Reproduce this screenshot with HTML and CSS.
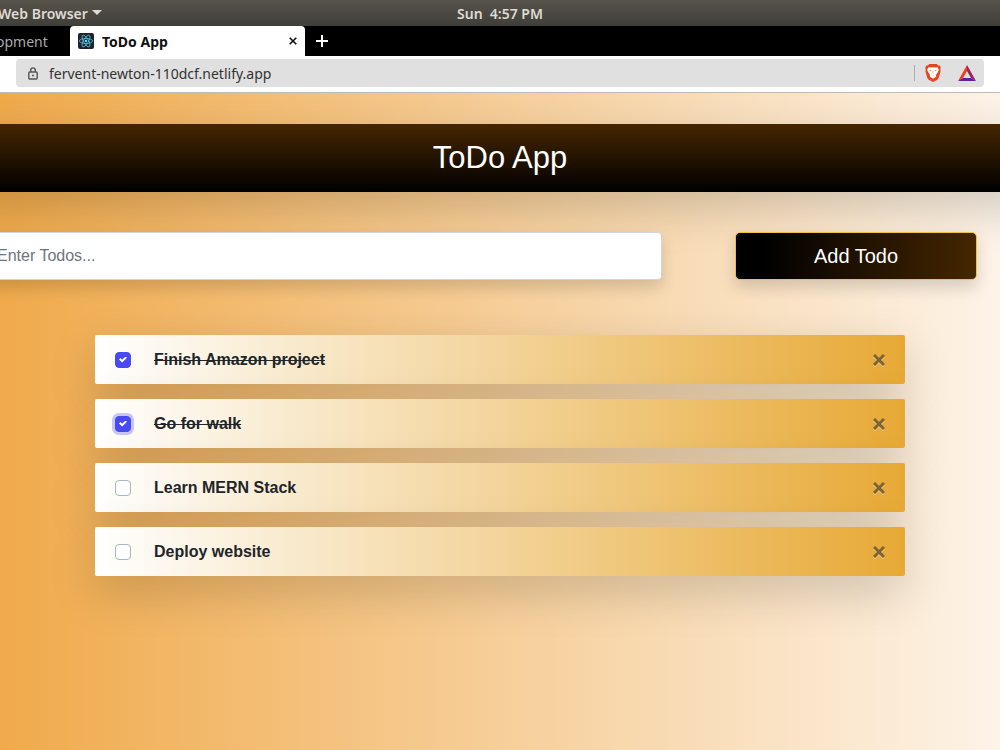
FILE: index.html
```
<!DOCTYPE html>
<html lang="en">

<head>
    <meta charset="UTF-8">
    <meta name="viewport" content="width=device-width, initial-scale=1.0">
    <title>ToDo App</title>
    <link rel="stylesheet" href="styles.css">
</head>

<body>

    <div class="system-bar">
        <button class="app-menu" type="button">
            Web Browser
            <svg width="10" height="6" viewBox="0 0 10 6"><path d="M0 0h10L5 5z" fill="currentColor" /></svg>
        </button>
        <time class="clock">Sun&nbsp; 4:57 PM</time>
    </div>

    <nav class="tab-bar">
        <a class="tab" href="#">opment</a>
        <div class="tab tab-active">
            <svg class="favicon" width="16" height="16" viewBox="0 0 16 16">
                <rect width="16" height="16" rx="2" fill="#20232a" />
                <g fill="none" stroke="#53c1de" stroke-width=".8">
                    <ellipse cx="8" cy="8" rx="6.6" ry="2.5" />
                    <ellipse cx="8" cy="8" rx="6.6" ry="2.5" transform="rotate(60 8 8)" />
                    <ellipse cx="8" cy="8" rx="6.6" ry="2.5" transform="rotate(120 8 8)" />
                </g>
                <circle cx="8" cy="8" r="1.3" fill="#61dafb" />
            </svg>
            <a class="tab-title" href="#">ToDo App</a>
            <button class="tab-close" type="button" aria-label="Close tab">
                <svg width="8" height="8" viewBox="0 0 8 8"><path d="M.7.7l6.6 6.6M7.3.7L.7 7.3" stroke="#111" stroke-width="1.6" /></svg>
            </button>
        </div>
        <button class="tab-new" type="button" aria-label="New tab">
            <svg width="12" height="12" viewBox="0 0 12 12"><path d="M6 0v12M0 6h12" stroke="#fff" stroke-width="2" /></svg>
        </button>
    </nav>

    <div class="toolbar">
        <div class="address-bar">
            <svg width="10" height="13" viewBox="0 0 10 13">
                <rect x=".8" y="5" width="8.4" height="7" rx="1" fill="none" stroke="#555" stroke-width="1.4" />
                <path d="M2.7 5V3.2a2.3 2.3 0 0 1 4.6 0V5" fill="none" stroke="#555" stroke-width="1.4" />
                <circle cx="5" cy="8.5" r="1" fill="#555" />
            </svg>
            <input class="url" type="text" aria-label="Address" value="fervent-newton-110dcf.netlify.app">
            <span class="divider"></span>
            <button class="extension" type="button" aria-label="Shields">
                <svg width="16" height="18" viewBox="0 0 16 18">
                    <path d="M4.3 0h7.4l1.5 1.6 1.6-.1 1 2.5-.6 1.6.4 1.6-1.8 6.6-1.4 1.9L8 18l-4.4-2.3-1.4-1.9L.4 7.2l.4-1.6L.2 4l1-2.5 1.6.1z" fill="#e8451c" />
                    <path d="M3.5 3.2l2.2.4L8 3.2l2.3.4 2.2-.4 1.3 2.2-.7 2.3-2.2 3.2.4 1.5L8 14.7l-3.3-2.3.4-1.5-2.2-3.2-.7-2.3z" fill="#fff" />
                    <path d="M4.3 5.8l2.2.4-.4 1.1-1.3-.5zM11.7 5.8l-2.2.4.4 1.1 1.3-.5zM6.6 10.6l1.4.6 1.4-.6L8 11.8zM7.7 6.5h.6v3h-.6z" fill="#f08a6a" />
                </svg>
            </button>
            <button class="extension" type="button" aria-label="Rewards">
                <svg width="18" height="16" viewBox="0 0 18 16">
                    <path d="M9 0L0 16l5-3 4-7z" fill="#f43b1e" />
                    <path d="M9 0l9 16-5-3-4-7z" fill="#9e1f63" />
                    <path d="M0 16h18l-5-3H5z" fill="#5b1fa0" />
                </svg>
            </button>
        </div>
    </div>

    <main class="page">
        <header class="heading">
            <h1>ToDo App</h1>
        </header>

        <form class="todo-form">
            <input class="todo-input" type="text" placeholder="Enter Todos..." aria-label="Enter Todos">
            <button class="todo-add" type="button">Add Todo</button>
        </form>

        <ul class="todo-list">
            <li class="todo">
                <input type="checkbox" id="todo1" checked>
                <label for="todo1">Finish Amazon project</label>
                <button class="todo-delete" type="button" aria-label="Delete">
                    <svg width="12" height="12" viewBox="0 0 12 12"><path d="M1 1l10 10M11 1L1 11" /></svg>
                </button>
            </li>
            <li class="todo">
                <input class="focused" type="checkbox" id="todo2" checked>
                <label for="todo2">Go for walk</label>
                <button class="todo-delete" type="button" aria-label="Delete">
                    <svg width="12" height="12" viewBox="0 0 12 12"><path d="M1 1l10 10M11 1L1 11" /></svg>
                </button>
            </li>
            <li class="todo">
                <input type="checkbox" id="todo3">
                <label for="todo3">Learn MERN Stack</label>
                <button class="todo-delete" type="button" aria-label="Delete">
                    <svg width="12" height="12" viewBox="0 0 12 12"><path d="M1 1l10 10M11 1L1 11" /></svg>
                </button>
            </li>
            <li class="todo">
                <input type="checkbox" id="todo4">
                <label for="todo4">Deploy website</label>
                <button class="todo-delete" type="button" aria-label="Delete">
                    <svg width="12" height="12" viewBox="0 0 12 12"><path d="M1 1l10 10M11 1L1 11" /></svg>
                </button>
            </li>
        </ul>
    </main>

</body>

</html>
```
FILE: styles.css
```
* {
    box-sizing: border-box;
}

body {
    margin: 0;
    min-height: 100vh;
    display: flex;
    flex-direction: column;
    overflow-x: hidden;
    font-family: "Liberation Sans", Arial, sans-serif;
    font-size: 16px;
}

button {
    border: 0;
    padding: 0;
    background: none;
    font-family: inherit;
    cursor: pointer;
}

svg {
    display: block;
}

a {
    color: inherit;
    text-decoration: none;
}

.system-bar,
.tab-bar,
.toolbar {
    font-family: "Noto Sans", sans-serif;
    font-size: 14px;
}

.system-bar {
    display: grid;
    grid-template-columns: 1fr auto 1fr;
    align-items: center;
    height: 26px;
    background: linear-gradient(#57544b, #3f3e39);
    color: #dfdbd2;
    font-weight: 600;
}

.app-menu {
    display: flex;
    align-items: center;
    gap: 4px;
    margin-left: -2px;
    color: inherit;
    font-size: 14px;
    font-weight: 600;
}

.tab-bar {
    display: flex;
    align-items: center;
    height: 30px;
    background: #000;
    color: #aaa;
}

.tab {
    width: 70px;
    margin-left: -4px;
}

.tab-active {
    display: flex;
    align-items: center;
    align-self: stretch;
    width: 235px;
    margin-left: 4px;
    padding: 0 8px;
    border-radius: 4px 4px 0 0;
    background: #fff;
    color: #111;
    font-weight: 700;
}

.tab-title {
    flex: 1;
    margin-left: 8px;
}

.tab-new {
    margin-left: 11px;
}

.toolbar {
    height: 37px;
    padding: 3px 16px;
    border-bottom: 1px solid #bbb;
    background: #fff;
}

.address-bar {
    display: flex;
    align-items: center;
    height: 28px;
    padding: 0 8px 0 12px;
    border-radius: 4px;
    background: #e0e0e0;
}

.url {
    flex: 1;
    margin-left: 11px;
    padding: 0;
    border: 0;
    outline: 0;
    background: none;
    color: #333;
    font-family: inherit;
    font-size: 14px;
}

.divider {
    width: 1px;
    height: 16px;
    margin-right: 10px;
    background: #a5acb2;
}

.extension + .extension {
    margin-left: 17px;
}

.page {
    flex: 1;
    padding-top: 31px;
    overflow: hidden;
    background: linear-gradient(to right, #f0aa4b, #fdf3e7);
}

/* bleeds past both edges so its shadow reaches the sides of the page */
.heading {
    display: flex;
    align-items: center;
    justify-content: center;
    height: 68px;
    margin: 0 -48px;
    background: linear-gradient(#452600, #000);
    box-shadow: 0 16px 48px rgba(0, 0, 0, .175);
    color: #fff;
}

.heading h1 {
    margin: 0;
    font-size: 31px;
    font-weight: 400;
}

.todo-form {
    display: flex;
    gap: 73px;
    margin: 40px 23px 0 -16px;
}

.todo-input {
    flex: 1;
    min-width: 0;
    height: 48px;
    padding: 0 12px;
    border: 1px solid #ced4da;
    border-radius: 4px;
    background: #fff;
    box-shadow: 0 8px 16px rgba(0, 0, 0, .15);
    color: #495057;
    font-family: inherit;
    font-size: 16px;
}

.todo-input::placeholder {
    color: #6c757d;
}

.todo-add {
    width: 242px;
    height: 48px;
    border: 1px solid #f0c040;
    border-radius: 5px;
    background: linear-gradient(to right, #000 10%, #452600);
    box-shadow: 0 8px 16px rgba(0, 0, 0, .15);
    color: #fff;
    font-size: 20px;
}

.todo-list {
    display: flex;
    flex-direction: column;
    gap: 15px;
    width: 81%;
    margin: 55px auto 0;
    padding: 0;
    list-style: none;
}

.todo {
    display: flex;
    align-items: center;
    height: 49px;
    padding: 0 20px;
    border-radius: 2px;
    background: linear-gradient(to right, #fff, #e7a935);
    box-shadow: 0 16px 48px rgba(0, 0, 0, .175);
    color: #212529;
    font-weight: 700;
}

.todo label {
    flex: 1;
    margin-left: 23px;
}

.todo input {
    display: grid;
    place-items: center;
    width: 16px;
    height: 16px;
    margin: 0;
    appearance: none;
    border: 1px solid #adb5bd;
    border-radius: 4px;
    background: #fff;
}

.todo input:checked {
    border-color: #4a4af4;
    background: #4a4af4;
}

.todo input:checked::before {
    content: "";
    width: 8px;
    height: 6px;
    background: #fff;
    clip-path: polygon(0 50%, 18% 26%, 38% 55%, 82% 0, 100% 22%, 40% 100%);
}

.todo input.focused {
    box-shadow: 0 0 0 3px rgba(74, 74, 244, .3);
}

.todo input:checked + label {
    text-decoration: line-through;
}

.todo-delete svg {
    fill: none;
    stroke: #7d6433;
    stroke-width: 3;
    filter: drop-shadow(0 1px 0 rgba(255, 255, 255, .4));
}
```
